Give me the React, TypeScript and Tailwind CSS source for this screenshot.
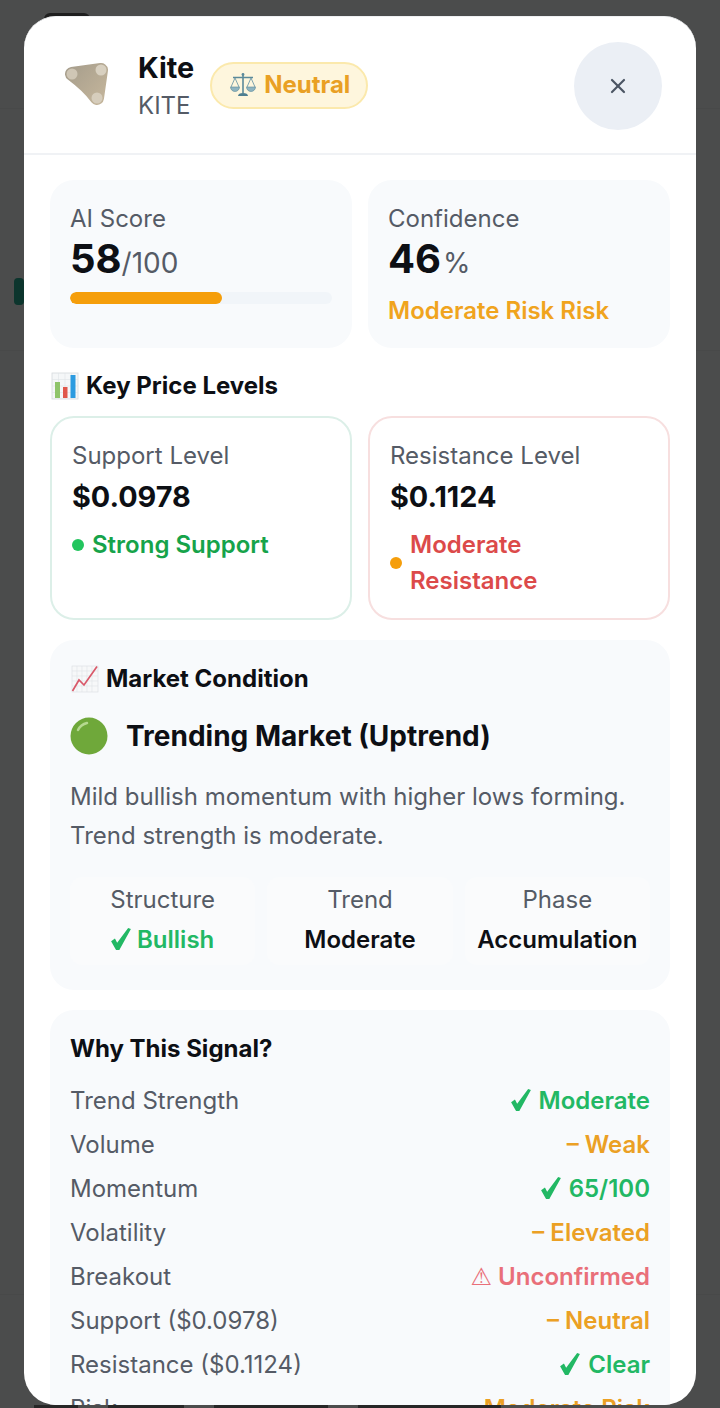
import React from 'react';
import { X } from 'lucide-react';

const FONT = "font-['Inter','Noto_Sans',sans-serif]";

const ScalesIcon = () => (
  <svg width="28" height="28" viewBox="0 0 28 28" fill="none">
    <path d="M14 3v19" stroke="#5b8a9a" strokeWidth="1.6" />
    <circle cx="14" cy="3.5" r="1.4" fill="#5b8a9a" />
    <path d="M4 6.5h20" stroke="#5b8a9a" strokeWidth="1.6" />
    <path d="M6 7L2 16M6 7l4 9M22 7l-4 9M22 7l4 9" stroke="#6f9aa8" strokeWidth="0.9" />
    <path d="M1.5 16h9a4.5 4.5 0 0 1-9 0zM17.5 16h9a4.5 4.5 0 0 1-9 0z" fill="#8fb4c0" stroke="#5b8a9a" strokeWidth="0.6" />
    <path d="M9 25c0-2 2-3 5-3s5 1 5 3z" fill="#4f7f91" />
  </svg>
);

const KiteLogo = () => (
  <svg width="46" height="46" viewBox="0 0 46 46">
    <defs>
      <linearGradient id="kite" gradientUnits="userSpaceOnUse" x1="4" y1="8" x2="40" y2="40">
        <stop offset="0" stopColor="#a89f8d" />
        <stop offset="1" stopColor="#c4b59b" />
      </linearGradient>
    </defs>
    <path
      d="M8 12L37 8L33 36Q24 24 8 12Z"
      fill="url(#kite)"
      stroke="url(#kite)"
      strokeWidth="14"
      strokeLinejoin="round"
    />
    <circle cx="8" cy="12" r="5.5" fill="#cfc6b5" />
    <circle cx="37" cy="8" r="5.5" fill="#d8d0c0" />
    <circle cx="33" cy="36" r="5.5" fill="#d6cdbc" />
  </svg>
);

const ChartEmoji = () => (
  <svg width="28" height="28" viewBox="0 0 28 28">
    <rect x="1" y="1" width="26" height="26" fill="#f5f7f8" stroke="#d5dadd" strokeWidth="0.8" />
    <path d="M1 7.5h26M1 14h26M1 20.5h26M7.5 1v26M14 1v26M20.5 1v26" stroke="#dfe4e7" strokeWidth="0.6" />
    <rect x="4" y="10" width="5" height="16" fill="#8fc46a" />
    <rect x="12" y="15" width="4.5" height="11" fill="#e0574b" />
    <rect x="19.5" y="3" width="5" height="23" fill="#2c9be0" />
  </svg>
);

const TrendEmoji = () => (
  <svg width="28" height="28" viewBox="0 0 28 28">
    <rect x="1" y="1" width="26" height="26" fill="#f7f8f9" stroke="#d9dde0" strokeWidth="0.6" />
    <path d="M1 6h26M1 11h26M1 16h26M1 21h26M6 1v26M11 1v26M16 1v26M21 1v26" stroke="#dfe3e6" strokeWidth="0.6" />
    <path d="M1.5 26L8 15l5 5L26 1.5" fill="none" stroke="#d9596a" strokeWidth="1.7" />
  </svg>
);

const GreenDot = () => (
  <svg width="38" height="38" viewBox="0 0 38 38" className="shrink-0">
    <circle cx="19" cy="19" r="18.5" fill="#6fa83a" />
    <path d="M8 13c2-4 5-6 9-7" fill="none" stroke="#b5d98f" strokeWidth="2.5" strokeLinecap="round" />
  </svg>
);

// the tapered check mark from the reference, no installed font has it
const Check = ({ className }: { className: string }) => (
  <svg viewBox="0 0 18 20" className={`inline-block fill-current align-[-2px] ${className}`}>
    <path d="M0 12L3.5 9.5L5.5 13.5L15.5 0L18 1L7.5 20L4.5 20Z" />
  </svg>
);

const Glyph = ({ children }: { children: string }) => (
  <span className="font-['DejaVu_Sans',sans-serif] font-bold">{children}</span>
);

const Stat = ({ label, children }: { label: string; children: React.ReactNode }) => (
  <div className="flex flex-col items-center flex-1 h-[88px] pt-[3px] rounded-xl bg-[#fafbfc]">
    <span className="text-[24px] leading-[40px] text-[#555b66]">{label}</span>
    {children}
  </div>
);

const rows: { label: string; icon: string; value: string; color: string }[] = [
  { label: 'Trend Strength', icon: '✓', value: 'Moderate', color: 'text-[#22b864]' },
  { label: 'Volume', icon: '–', value: 'Weak', color: 'text-[#eba024]' },
  { label: 'Momentum', icon: '✓', value: '65/100', color: 'text-[#22b864]' },
  { label: 'Volatility', icon: '–', value: 'Elevated', color: 'text-[#eba024]' },
  { label: 'Breakout', icon: '⚠', value: 'Unconfirmed', color: 'text-[#e96f79]' },
  { label: 'Support ($0.0978)', icon: '–', value: 'Neutral', color: 'text-[#eba024]' },
  { label: 'Resistance ($0.1124)', icon: '✓', value: 'Clear', color: 'text-[#22b864]' },
  { label: 'Risk', icon: '–', value: 'Moderate Risk', color: 'text-[#eba024]' },
];

export default function App() {
  return (
    <div className={`relative h-[1408px] overflow-hidden bg-[#4b4c4c] pt-4 px-6 ${FONT}`}>
      {/* dimmed page behind the modal */}
      <div className="absolute left-0 top-[108px] w-full h-px bg-[#484949]" />
      <div className="absolute left-0 top-[350px] w-full h-px bg-[#484949]" />
      <div className="absolute left-0 top-[1294px] w-full h-px bg-[#484949]" />
      <div className="absolute left-[14px] top-[278px] w-[10px] h-[27px] rounded-sm bg-[#0c352d]" />
      <div className="absolute left-[44px] top-[13px] w-[46px] h-[6px] rounded-t-full bg-[#1e1e1e]" />
      <div className="absolute left-[34px] bottom-0 flex gap-[30px] h-[3px]">
        <div className="w-[44px] bg-[#262626]" />
        <div className="w-[76px] bg-[#262626]" />
        <div className="w-[114px] bg-[#262626]" />
        <div className="w-[143px] bg-[#262626]" />
      </div>

      <div className="relative flex flex-col h-[1389px] overflow-hidden rounded-[32px] bg-white border-t border-[#eef0f2]">
        {/* Header */}
        <div className="flex items-center shrink-0 h-[138px] pl-[40px] pr-[34px] border-b-2 border-[#f0f2f5]">
          <KiteLogo />
          <div className="flex flex-col ml-[28px] mt-[-1px]">
            <span className="text-[28.8px] leading-[42px] font-bold text-[#0d0f14]">Kite</span>
            <span className="text-[24px] leading-[34px] text-[#555b66]">KITE</span>
          </div>
          <div className="flex items-center gap-[7px] ml-[16px] h-[47px] pl-[17px] pr-[16px] rounded-full bg-[#fef6dd] border-2 border-[#fbe9ac]">
            <ScalesIcon />
            <span className="text-[24px] font-bold text-[#e9a024]">Neutral</span>
          </div>
          <button className="flex items-center justify-center ml-auto w-[88px] h-[88px] rounded-full bg-[#ebeff5] mt-[2px]">
            <X className="w-[24px] h-[24px] text-[#4b5563]" strokeWidth={2.2} />
          </button>
        </div>

        {/* Body */}
        <div className="flex flex-col px-[26px] pt-[25px]">
          <div className="grid grid-cols-2 gap-4">
            <div className="h-[168px] rounded-[24px] bg-[#f8fafc] px-5 pt-[21px]">
              <div className="text-[24px] leading-[36px] text-[#555b66]">AI Score</div>
              <div className="flex items-baseline leading-[48px] mt-[-2px]">
                <span className="text-[40px] font-bold text-[#0d0f14]">58</span>
                <span className="text-[28px] text-[#555b66]">/100</span>
              </div>
              <div className="h-3 mt-[5px] rounded-full bg-[#f1f5f9] overflow-hidden">
                <div className="h-full rounded-full bg-[#f59e0b]" style={{ width: '58%' }} />
              </div>
            </div>
            <div className="h-[168px] rounded-[24px] bg-[#f8fafc] px-5 pt-[21px]">
              <div className="text-[24px] leading-[36px] text-[#555b66]">Confidence</div>
              <div className="flex items-baseline leading-[48px] mt-[-2px]">
                <span className="text-[40px] font-bold text-[#0d0f14]">46</span>
                <span className="text-[28px] text-[#555b66] ml-[2px]">%</span>
              </div>
              <div className="text-[24px] leading-[36px] font-semibold text-[#f0a41e] mt-[6px]">Moderate Risk Risk</div>
            </div>
          </div>

          <div className="flex items-center gap-[7px] mt-[23px] h-[30px] pl-px">
            <ChartEmoji />
            <span className="text-[24px] font-bold text-[#0d0f14]">Key Price Levels</span>
          </div>

          <div className="grid grid-cols-2 gap-4 mt-[15px]">
            <div className="h-[204px] rounded-[24px] border-2 border-[#dcefe8] bg-white px-5 pt-[20px]">
              <div className="text-[24px] leading-[36px] text-[#555b66]">Support Level</div>
              <div className="text-[28.8px] leading-[44px] font-bold text-[#0d0f14] mt-[1px]">$0.0978</div>
              <div className="flex items-center gap-2 mt-[8px]">
                <span className="w-3 h-3 rounded-full bg-[#22c55e] shrink-0" />
                <span className="text-[24px] leading-[36px] font-semibold text-[#16a34a]">Strong Support</span>
              </div>
            </div>
            <div className="h-[204px] rounded-[24px] border-2 border-[#f7dfdf] bg-white px-5 pt-[20px]">
              <div className="text-[24px] leading-[36px] text-[#555b66]">Resistance Level</div>
              <div className="text-[28.8px] leading-[44px] font-bold text-[#0d0f14] mt-[1px]">$0.1124</div>
              <div className="flex items-center gap-2 mt-[8px]">
                <span className="w-3 h-3 rounded-full bg-[#f59e0b] shrink-0" />
                <span className="text-[24px] leading-[36px] font-semibold text-[#dc4a4a]">Moderate Resistance</span>
              </div>
            </div>
          </div>

          {/* Market condition */}
          <div className="h-[350px] mt-[20px] rounded-[24px] bg-[#f8fafc] px-5 pt-[24px]">
            <div className="flex items-center gap-[7px] h-[30px] pl-px">
              <TrendEmoji />
              <span className="text-[24px] font-bold text-[#0d0f14]">Market Condition</span>
            </div>
            <div className="flex items-center gap-[18px] mt-[23px] h-[38px]">
              <GreenDot />
              <span className="text-[28px] font-bold text-[#0d0f14]">Trending Market (Uptrend)</span>
            </div>
            <p className="text-[24px] leading-[39px] text-[#555b66] mt-[22px]">
              Mild bullish momentum with higher lows forming. Trend strength is moderate.
            </p>
            <div className="flex gap-3 mt-[22px]">
              <Stat label="Structure">
                <span className="text-[24px] leading-[40px] font-semibold text-[#22b864]">
                  <Check className="w-[20px] h-[22px] mr-[6px]" />Bullish
                </span>
              </Stat>
              <Stat label="Trend">
                <span className="text-[24px] leading-[40px] font-semibold text-[#0d0f14]">Moderate</span>
              </Stat>
              <Stat label="Phase">
                <span className="text-[24px] leading-[40px] font-semibold text-[#0d0f14]">Accumulation</span>
              </Stat>
            </div>
          </div>

          {/* Why this signal */}
          <div className="mt-[20px] rounded-[24px] bg-[#f8fafc] px-5 pt-[21px] pb-5">
            <div className="text-[24px] leading-[36px] font-bold text-[#0d0f14] mb-[12px]">Why This Signal?</div>
            <div className="flex flex-col">
              {rows.map((row) => (
                <div key={row.label} className="flex items-center justify-between h-[44px]">
                  <span className="text-[24px] text-[#555b66]">{row.label}</span>
                  <span className={`text-[24px] font-semibold ${row.color}`}>
                    {row.icon === '✓' && <Check className="w-[20px] h-[22px] mr-[8px]" />}
                    {row.icon === '⚠' && <><Glyph>⚠</Glyph> </>}
                    {row.icon === '–' && '– '}
                    {row.value}
                  </span>
                </div>
              ))}
            </div>
          </div>
        </div>
      </div>
    </div>
  );
}
